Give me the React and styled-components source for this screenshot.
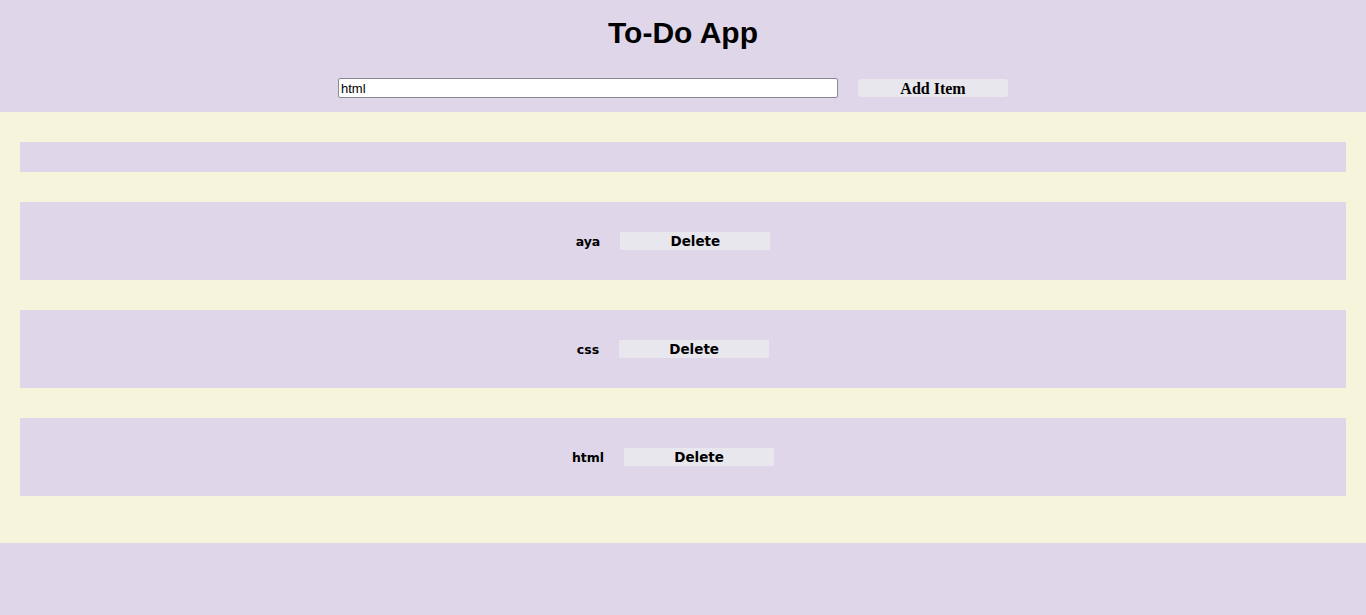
import React, { useState } from 'react';
import styled, { createGlobalStyle } from 'styled-components';

const GlobalStyle = createGlobalStyle`
  html, body {
    margin: 0;
    padding: 0;
    background: #dfd6e9;
    font-family: "Liberation Sans", Arial, sans-serif;
  }
`;

const Header = styled.header`
  background: #dfd6e9;
  padding: 14px 0 14px;
  text-align: center;
`;

const Title = styled.h1`
  margin: 0 0 27px;
  font-size: 30px;
  line-height: 37px;
  font-weight: bold;
  color: #000;
`;

const Form = styled.div`
  display: flex;
  justify-content: center;
  align-items: center;
`;

const TextInput = styled.input`
  width: 500px;
  height: 20px;
  box-sizing: border-box;
  padding: 1px 2px;
  border: 1px solid #8a8a95;
  border-radius: 2px;
  background: #fff;
  font-family: "Liberation Sans", Arial, sans-serif;
  font-size: 13px;
  color: #000;
  outline: none;
`;

const Button = styled.button`
  width: 150px;
  height: 18px;
  margin: 0 20px;
  padding: 0;
  border: none;
  border-radius: ${p => (p.$rounded ? '3px' : '0')};
  background: #e9e7ee;
  color: #000;
  font-family: ${p => (p.$serif ? '"Liberation Serif", "Times New Roman", serif' : '"DejaVu Sans", Verdana, sans-serif')};
  font-size: ${p => (p.$serif ? '16px' : '13.5px')};
  font-weight: bold;
  line-height: ${p => (p.$serif ? '19px' : '18px')};
  cursor: pointer;
`;

const List = styled.ul`
  list-style: none;
  margin: 0;
  padding: 30px 20px 17px;
  background: #f5f5dc;
`;

const Item = styled.li`
  box-sizing: border-box;
  display: flex;
  justify-content: center;
  align-items: center;
  min-height: 30px;
  padding: ${p => (p.$empty ? '0' : '30px 0')};
  margin-bottom: 30px;
  background: #dfd6e9;
`;

const ItemText = styled.span`
  font-family: "DejaVu Sans", Verdana, sans-serif;
  font-size: 12.5px;
  font-weight: bold;
  color: #000;
`;

export default function App() {
  const [text, setText] = useState('html');
  const [items, setItems] = useState(['aya', 'css', 'html']);

  const add = () => {
    if (!text.trim()) return;
    setItems([...items, text]);
  };

  const remove = i => setItems(items.filter((_, idx) => idx !== i));

  return (
    <>
      <GlobalStyle />
      <Header>
        <Title>To-Do App</Title>
        <Form>
          <TextInput value={text} onChange={e => setText(e.target.value)} />
          <Button $serif $rounded onClick={add}>Add Item</Button>
        </Form>
      </Header>
      <List>
        <Item $empty />
        {items.map((it, i) => (
          <Item key={i}>
            <ItemText>{it}</ItemText>
            <Button onClick={() => remove(i)}>Delete</Button>
          </Item>
        ))}
      </List>
    </>
  );
}
